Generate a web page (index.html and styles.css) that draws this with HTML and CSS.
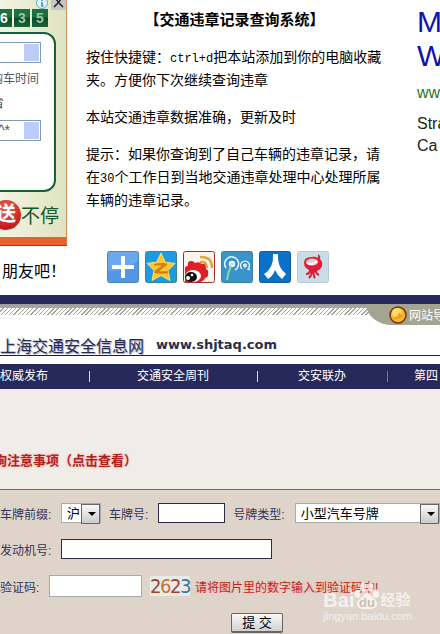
FILE: index.html
```html
<!DOCTYPE html>
<html lang="zh-CN">
<head>
  <meta charset="UTF-8" />
  <meta name="viewport" content="width=device-width, initial-scale=1.0"/>
  <title>交通违章记录查询系统</title>
  <link rel="stylesheet" href="styles.css">
</head>
<body>

  <main class="top">
    <aside class="ad-left">
      <div class="ad-tools">
        <svg width="12" height="12" viewBox="0 0 12 12"><circle cx="6" cy="3" r="5.500" fill="#e5f2f4" stroke="#62adc9"/><path d="M6 0v1M5 3h1v3h1.500" fill="none" stroke="#2795c0" stroke-width="1.500"/></svg>
        <svg class="ad-close" width="15" height="10" viewBox="0 0 15 10"><path d="M3 7L7.500 2.500L12 7M5 -1l2.500 3.500L10 -1" fill="none" stroke="#222" stroke-width="1.500"/></svg>
      </div>
      <div class="digits"><span>6</span><span class="faded">3</span><span class="faded">5</span></div>
      <div class="ad-panel">
        <div class="ad-field"></div>
        <p>购车时间</p>
        <p class="short">省</p>
        <div class="ad-field">^*</div>
      </div>
      <div class="ad-slogan">
        <span class="ball">送</span><span>不停</span>
      </div>
    </aside>

    <section class="intro">
      <h1>【交通违章记录查询系统】</h1>
      <p>按住快捷键：<kbd>ctrl+d</kbd>把本站添加到你的电脑收藏夹。方便你下次继续查询违章</p>
      <p>本站交通违章数据准确，更新及时</p>
      <p>提示：如果你查询到了自己车辆的违章记录，请在<kbd>30</kbd>个工作日到当地交通违章处理中心处理所属车辆的违章记录。</p>
    </section>

    <aside class="ad-right">
      <a class="ad-title" href="#">M<br>W</a>
      <a class="ad-url" href="#">www</a>
      <p>Stra<br>Ca</p>
    </aside>
  </main>

  <div class="share">
    <span>朋友吧！</span>
    <div class="share-icons">
      <a href="#" aria-label="分享">
        <svg width="32" height="32" viewBox="0 0 32 32"><rect x=".5" y=".5" width="31" height="31" rx="2" fill="#6aa9ee" stroke="#4788bd"/><path d="M1 20Q16 20 31 10V31H1z" fill="#5596e3"/><path d="M14 5h4v9h9v4h-9v9h-4v-9H5v-4h9z" fill="#fff"/></svg>
      </a>
      <a href="#" aria-label="QQ空间">
        <svg width="32" height="32" viewBox="0 0 32 32"><rect x=".5" y=".5" width="31" height="31" rx="2" fill="#1c9be0" stroke="#3585ac"/><path d="M16 2l4.300 9.200L30 12.400l-7 7L25 29.500l-9-5-9 5 2-10.100-7-7 9.700-1.200z" fill="#fcc62e" stroke="#f8e27b"/><path d="M9 13q7-1.500 13-.5v1.500L14 20q5 .8 9 0l.5 2q-7 1.500-14 0v-2l7.500-5.500q-4-.3-8 0z" fill="#d97b10"/></svg>
      </a>
      <a href="#" aria-label="新浪微博">
        <svg width="32" height="32" viewBox="0 0 32 32"><rect x=".5" y=".5" width="31" height="31" rx="2" fill="#fdf3ef" stroke="#9c302b"/><path d="M2 20q-1-5 3-5-1-5 3-5 3 0 4 2 4-2 7 1 2-1 4 1 1 2 0 4 3 1 2 4 1 4-3 5-1 3-5 4H2z" fill="#dd2028"/><ellipse cx="10" cy="25" rx="8" ry="6" fill="#fff"/><ellipse cx="8" cy="26" rx="6" ry="5" fill="#111"/><circle cx="5" cy="27" r="2" fill="#fff"/><circle cx="9" cy="24" r="1.300" fill="#fff"/><path d="M17 6q12-1 12 11M17 11q7-1 7 6" fill="none" stroke="#e5a23a" stroke-width="2.500"/></svg>
      </a>
      <a href="#" aria-label="腾讯微博">
        <svg width="32" height="32" viewBox="0 0 32 32"><rect x=".5" y=".5" width="31" height="31" rx="2" fill="#3894cb" stroke="#377fa5"/><g fill="none" stroke="#e9f7fb"><path d="M5 17a7 7 0 1 1 9 2" stroke-width="1.500"/><circle cx="11" cy="13" r="2" stroke-width="2.500"/><path d="M21 18a4.500 4.500 0 1 1 6 0l2 1" stroke-width="1.300"/><circle cx="24" cy="14.500" r="1.200" stroke-width="1.600"/><path d="M10 15q-3 6-4 14" stroke="#8edb91" stroke-width="2"/></g></svg>
      </a>
      <a href="#" aria-label="人人网">
        <svg width="32" height="32" viewBox="0 0 32 32"><rect x=".5" y=".5" width="31" height="31" rx="2" fill="#0871ca" stroke="#195a9b"/><path d="M14 3h5q-1 13 8 20l-4 5q-5-4-7-9-2 6-7 9l-4-5q10-6 9-20z" fill="#fff"/></svg>
      </a>
      <a href="#" aria-label="搜狐">
        <svg width="32" height="32" viewBox="0 0 32 32"><rect x=".5" y=".5" width="31" height="31" rx="2" fill="#c8dde5" stroke="#b4cbd6"/><path d="M21 3q3 2 2 5 4 4 1 9-3 4-9 3-8-2-8-8 0-6 7-6 4-1 7 1z" fill="#e01c37"/><ellipse cx="15" cy="11" rx="6" ry="3.500" fill="#fac3c6"/><path d="M10 12q5 3 10-2" stroke="#fff" stroke-width="2" fill="none"/><path d="M13 19q0 4-4 4M15 19q0 5-3 8M17 19q-1 6 1 8M19 18q-1 4 3 6" stroke="#d71d38" stroke-width="2" fill="none"/></svg>
      </a>
    </div>
  </div>

  <header class="site-header">
    <div class="stripes">
      <a class="guide" href="#">
        <svg width="18" height="18" viewBox="0 0 18 18"><circle cx="9" cy="9" r="8" fill="#f9b52b" stroke="#6e3413" stroke-width="1.500"/><circle cx="8" cy="7" r="5" fill="#ffdc65"/><path d="M5 12q4 1 6-5M10 12l3-3" fill="none" stroke="#f29a1d" stroke-width="2"/></svg>
        网站导
      </a>
    </div>
    <div class="brand">
      <strong>上海交通安全信息网</strong>
      <b>www.shjtaq.com</b>
    </div>
    <nav>
      <a href="#">权威发布</a>
      <a href="#">交通安全周刊</a>
      <a href="#">交安联办</a>
      <a href="#">第四</a>
    </nav>
  </header>

  <section class="notice">
    <a href="#">询注意事项（点击查看）</a>
  </section>

  <form class="query">
    <div class="row">
      <label for="prefix">车牌前缀:</label>
      <span class="pick prefix"><select id="prefix"><option>沪</option></select></span>
      <label for="plate">车牌号:</label>
      <input class="plate" id="plate" type="text">
      <label for="kind">号牌类型:</label>
      <span class="pick kind"><select id="kind"><option>小型汽车号牌</option></select></span>
    </div>
    <div class="row">
      <label for="engine">发动机号:</label>
      <input class="engine" id="engine" type="text">
    </div>
    <div class="row captcha-row">
      <label for="code">验证码:</label>
      <input class="code" id="code" type="text">
      <span class="captcha"><i>2</i><i>6</i><i>2</i><i>3</i></span>
      <span class="hint">请将图片里的数字输入到验证码中!</span>
    </div>
    <button type="button">提 交</button>

    <div class="watermark">
      <div class="mark-name">
        <span>Bai</span>
        <svg width="26" height="28" viewBox="0 0 26 28" fill="currentColor"><ellipse cx="3.500" cy="12" rx="3" ry="4"/><ellipse cx="9" cy="5" rx="3" ry="4.500"/><ellipse cx="16.500" cy="5" rx="3" ry="4.500"/><ellipse cx="22" cy="12" rx="3" ry="4"/><path d="M13 11q3 0 5 4 5 3 5 7 0 6-10 5-10 1-10-5 0-4 5-7 2-4 5-4z"/><text x="5" y="25">du</text></svg>
        <span class="mark-cn">经验</span>
      </div>
      <div class="mark-url">jingyan.baidu.com</div>
    </div>
  </form>

</body>
</html>
```
FILE: styles.css
```css
:root {
  --navy: #26295a;
  --sand: #ded4ca;
  --khaki: #a5a492;
}

* {
  box-sizing: border-box;
  margin: 0;
  padding: 0;
}

body {
  display: flex;
  flex-direction: column;
  min-height: 100vh;
  overflow: hidden;
  background: #fff;
  color: #000;
  font-family: "Liberation Sans", "Noto Sans CJK SC", sans-serif;
  font-size: 12px;
}

a {
  color: inherit;
  text-decoration: none;
}

.top {
  display: flex;
  align-items: flex-start;
}

/* left banner */
.ad-left {
  flex: none;
  width: 67px;
  overflow: hidden;
  background: linear-gradient(to right, #f2f4e2, #dfe3bf);
  border-right: 1px solid #d98b5c;
  border-bottom: 8px solid #e8622a;
  box-shadow: 0 1px 0 #7a4a30;
}

.ad-tools {
  display: flex;
  justify-content: flex-end;
  gap: 3px;
  height: 9px;
}

.ad-close {
  background: #c5c5c5;
}

.digits {
  display: flex;
  justify-content: flex-end;
  gap: 2px;
  padding-right: 18px;
}

.digits span {
  flex: none;
  width: 16px;
  height: 18px;
  background: linear-gradient(#1d7040 45%, #0b4a27 50%, #1a6539);
  color: #fff;
  font-size: 14px;
  font-weight: bold;
  line-height: 18px;
  text-align: center;
}

.digits .faded {
  color: #9cc3a5;
}

.ad-panel {
  height: 160px;
  margin: 5px 10px 0 -20px;
  padding: 8px 13px 0 0;
  background: #fff;
  border: 2px solid #14613a;
  border-radius: 12px;
  color: #555;
}

.ad-panel p {
  margin: 7px 2px 7px 0;
  line-height: 18px;
  text-align: right;
}

.ad-panel .short {
  margin-right: 37px;
}

.ad-field {
  height: 21px;
  padding-right: 30px;
  background: linear-gradient(#bccbf8, #bccbf8) right 1px center / 15px 17px no-repeat #fff;
  border: 1px solid #7f9db9;
  font-size: 14px;
  line-height: 19px;
  text-align: right;
}

.ad-slogan {
  display: flex;
  align-items: center;
  height: 45px;
  margin-left: -9px;
  color: #15572b;
  font-size: 19px;
  white-space: nowrap;
}

.ball {
  width: 30px;
  height: 30px;
  background: radial-gradient(circle at 50% 30%, #ec6350, #c41d1b 70%);
  border-radius: 50%;
  color: #fff;
  font-size: 20px;
  font-weight: bold;
  line-height: 28px;
  text-align: center;
}

.intro {
  flex: 1;
  padding: 8px 34px 0 19px;
  font-size: 14px;
  line-height: 23px;
}

.intro h1 {
  margin-bottom: 14px;
  font-size: 15px;
  line-height: 24px;
  text-align: center;
  white-space: nowrap;
}

.intro p {
  margin-bottom: 14px;
}

.intro kbd {
  font-family: "Liberation Mono", monospace;
  font-size: 12px;
  line-height: 1;
}

/* right text ad */
.ad-right {
  flex: none;
  width: 23px;
  padding-top: 5px;
  overflow: hidden;
  color: #222;
  font-size: 16px;
  line-height: 22px;
  white-space: nowrap;
}

.ad-title {
  display: block;
  color: #1212b0;
  font-size: 30px;
  line-height: 34px;
}

.ad-url {
  display: block;
  margin: 9px 0;
  color: #287528;
}

.share {
  display: flex;
  align-items: center;
  gap: 40px;
  height: 50px;
  padding-left: 2px;
  font-size: 16px;
  white-space: nowrap;
}

.share > span {
  width: 65px;
}

.share-icons {
  display: flex;
  gap: 6px;
  padding-bottom: 6px;
}

.share-icons svg {
  display: block;
}

/* site header */
.site-header {
  border-top: 9px solid var(--navy);
}

.stripes {
  display: flex;
  justify-content: flex-end;
  height: 21px;
  background:
    linear-gradient(#9c9c9c, #a8a8a8) top / 100% 4px no-repeat,
    repeating-linear-gradient(135deg, #fff 0 2px, #a3a396 2px 3px) 0 4px / 100% 7px no-repeat;
}

.guide {
  display: flex;
  align-items: center;
  gap: 2px;
  width: 74px;
  padding-left: 23px;
  overflow: hidden;
  background: var(--khaki);
  border-bottom-left-radius: 26px 21px;
  color: #fff;
  white-space: nowrap;
}

.guide svg {
  flex: none;
}

.brand {
  display: flex;
  align-items: center;
  gap: 12px;
  height: 31px;
  padding-top: 9px;
  border-bottom: 1px solid #222;
  color: #2a2c50;
  font-size: 16px;
}

.brand strong {
  font-weight: normal;
  text-shadow: 1px 1px 1px #9a9abb;
}

.brand b {
  font-family: "DejaVu Sans", sans-serif;
  font-size: 13px;
}

nav {
  display: flex;
  margin-top: 8px;
  background: var(--navy);
  color: #fff;
  line-height: 25px;
  white-space: nowrap;
}

nav a {
  position: relative;
  padding: 0 41px;
}

nav a:first-child {
  padding-left: 0;
}

nav a:nth-child(2) {
  padding: 0 48px;
}

nav a:last-child {
  padding: 0 0 0 27px;
}

nav a + a::before {
  content: "";
  position: absolute;
  left: 0;
  top: 7px;
  height: 11px;
  border-left: 1px solid #dcdce6;
}

nav a:last-child::before {
  border-color: #77789a;
}

.notice {
  height: 101px;
  padding-top: 62px;
  background: #f0ede8;
  border-bottom: 1px solid #77705a;
}

.notice a {
  display: block;
  margin-left: -6px;
  color: #b3201c;
  font-size: 13px;
  font-weight: bold;
  line-height: 20px;
  text-shadow: 0 0 3px #f7a39b;
}

/* query form */
.query {
  position: relative;
  flex: 1;
  display: flex;
  flex-direction: column;
  gap: 16px;
  padding-top: 13px;
  background: var(--sand);
  color: #34355c;
}

.row {
  display: flex;
  align-items: center;
  gap: 8px;
  height: 20px;
  white-space: nowrap;
}

.row label {
  padding-right: 2px;
}

.row label:first-child {
  flex: none;
  width: 53px;
}

.row input {
  height: 20px;
  background: #fff;
  border: 1px solid #2b2c4a;
}

.row .plate {
  width: 67px;
}

.row .engine {
  width: 211px;
}

.captcha-row {
  height: 22px;
}

.captcha-row label:first-child {
  width: 41px;
}

.row .code {
  width: 93px;
  height: 22px;
  border-color: #aaa;
}

.pick {
  position: relative;
}

.pick select {
  width: 100%;
  height: 20px;
  padding: 0 18px 0 5px;
  appearance: none;
  background: #fff;
  border: 1px solid #aaa;
  border-radius: 0;
  color: #000;
  font-family: inherit;
  font-size: 13px;
}

.pick::before {
  content: "";
  position: absolute;
  right: 1px;
  top: 1px;
  width: 17px;
  height: 18px;
  background: linear-gradient(#f8f8f8, #ccc);
  border: 1px solid #666;
  pointer-events: none;
}

.pick::after {
  content: "";
  position: absolute;
  right: 5px;
  top: 9px;
  border: 4px solid transparent;
  border-top-color: #000;
  border-bottom: 0;
  pointer-events: none;
}

.prefix {
  width: 40px;
}

.kind {
  flex: 1;
}

.captcha {
  display: flex;
  width: 40px;
  height: 20px;
  background: #e9ebe8;
  color: #a4402f;
  font-family: "Liberation Sans Narrow", "DejaVu Sans Condensed", sans-serif;
  font-size: 20px;
  line-height: 20px;
}

.captcha i {
  width: 10px;
  font-style: normal;
  text-align: center;
}

.captcha i:nth-child(2) {
  color: #c17539;
}

.captcha i:nth-child(4) {
  color: #34799b;
}

.hint {
  margin-left: -3px;
  color: #c42320;
  text-shadow: 0 0 3px #f5b5aa;
}

.query button {
  align-self: flex-start;
  width: 52px;
  height: 20px;
  margin-left: 231px;
  background: linear-gradient(#fafafa, #d0d0d0);
  border: 1px solid #666;
  border-bottom-width: 2px;
  border-radius: 2px;
  font-family: inherit;
  font-size: 13px;
  line-height: 16px;
}

.watermark {
  position: absolute;
  right: 28px;
  bottom: 11px;
  color: rgba(255, 255, 255, 0.7);
  pointer-events: none;
}

.mark-name {
  display: flex;
  align-items: flex-end;
  font-size: 20px;
  font-weight: bold;
  line-height: 20px;
}

.mark-name text {
  fill: #c9bfb6;
  font-size: 13px;
}

.mark-cn {
  font-size: 15px;
}

.mark-url {
  font-size: 11px;
  line-height: 13px;
}
```
